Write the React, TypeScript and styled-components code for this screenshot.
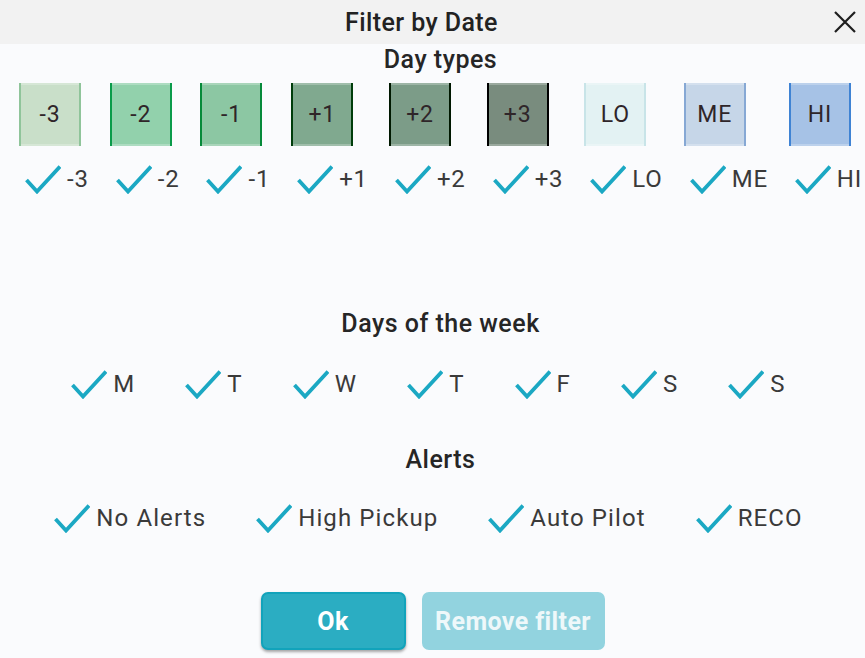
import React from "react";
import styled, { createGlobalStyle } from "styled-components";

const GlobalStyle = createGlobalStyle`
  html, body {
    margin: 0;
    padding: 0;
    background: #fafbfd;
  }
  body {
    font-family: Roboto, "Liberation Sans", sans-serif;
  }
`;

const Dialog = styled.div`
  width: 865px;
  height: 658px;
  overflow: hidden;
  background: #fafbfd;
  display: flex;
  flex-direction: column;
`;

const Header = styled.div`
  height: 44px;
  flex-shrink: 0;
  background: #f2f2f2;
  display: flex;
  align-items: center;
  padding-left: 18px;
`;

const HeaderTitle = styled.h1`
  flex: 1;
  margin: 0;
  text-align: center;
  font-size: 25px;
  font-weight: 500;
  letter-spacing: 0.4px;
  color: #222;
`;

const CloseButton = styled.button`
  width: 40px;
  height: 44px;
  border: 0;
  padding: 0;
  background: transparent;
  display: flex;
  align-items: center;
  justify-content: center;
  cursor: pointer;
`;

const SectionTitle = styled.h2<{ $top: number }>`
  margin: ${({ $top }) => $top}px 0 0;
  padding-left: 16px;
  height: 30px;
  line-height: 30px;
  text-align: center;
  font-size: 25px;
  font-weight: 500;
  letter-spacing: 0.5px;
  color: #262626;
`;

const DayTypeRow = styled.div`
  display: flex;
  gap: 21px;
  padding-left: 19px;
  margin-top: 8px;
`;

const DayTypeItem = styled.div`
  display: flex;
  flex-direction: column;
  align-items: flex-start;
  flex-shrink: 0;
  gap: 18px;
`;

const Swatch = styled.div<{ $bg: string; $edge: string }>`
  width: 58px;
  height: 63px;
  box-sizing: content-box;
  background: ${({ $bg }) => $bg};
  border-left: 2px solid ${({ $edge }) => $edge};
  border-right: 2px solid ${({ $edge }) => $edge};
  box-shadow: inset 0 2px 0 rgba(255, 255, 255, 0.25), inset 0 -2px 0 rgba(255, 255, 255, 0.25);
  display: flex;
  align-items: center;
  justify-content: center;
  font-size: 23px;
  letter-spacing: 0.8px;
  color: #2f2529;
`;

const CheckRow = styled.div<{ $indent?: number }>`
  display: flex;
  justify-content: center;
  gap: 50px;
  padding-right: 8px;
  margin-top: ${({ $indent }) => $indent ?? 0}px;
`;

const Check = styled.label<{ $shift?: boolean }>`
  display: flex;
  align-items: center;
  gap: 6px;
  height: 30px;
  margin-left: ${({ $shift }) => ($shift ? "6px" : "0")};
  font-size: 24px;
  letter-spacing: ${({ $shift }) => ($shift ? "0.8px" : "1.1px")};
  color: #3a3a3a;
  white-space: nowrap;
  cursor: pointer;
`;

const Footer = styled.div`
  display: flex;
  justify-content: center;
  gap: 16px;
  margin-top: 59px;
`;

const Button = styled.button<{ $disabled?: boolean }>`
  height: 58px;
  padding: 0;
  width: ${({ $disabled }) => ($disabled ? "183px" : "145px")};
  border-radius: 7px;
  border: 2px solid ${({ $disabled }) => ($disabled ? "#92d3df" : "#12a3bb")};
  background: ${({ $disabled }) => ($disabled ? "#92d3df" : "#2badc2")};
  box-shadow: ${({ $disabled }) => ($disabled ? "none" : "0 2px 3px rgba(0, 0, 0, 0.35)")};
  color: ${({ $disabled }) => ($disabled ? "#eef8fa" : "#ffffff")};
  font-family: Roboto, "Liberation Sans", sans-serif;
  font-size: 25px;
  font-weight: 700;
  letter-spacing: 0.4px;
`;

const CheckMark = () => (
  <svg width="36" height="29" viewBox="0 0 36 29">
    <path d="M1.5 15 L12 26.5 L35 1.5" fill="none" stroke="#1ba8c3" strokeWidth="3.8" strokeLinejoin="miter" />
  </svg>
);

const dayTypes = [
  { label: "-3", bg: "#c9dfc9", edge: "#8fc49a" },
  { label: "-2", bg: "#92d1ac", edge: "#0a9b4a" },
  { label: "-1", bg: "#8cc7a3", edge: "#068a3a" },
  { label: "+1", bg: "#80a98f", edge: "#003d0b" },
  { label: "+2", bg: "#7c9c88", edge: "#001800" },
  { label: "+3", bg: "#798c7e", edge: "#000000" },
  { label: "LO", bg: "#e3f2f3", edge: "#c8e4e8" },
  { label: "ME", bg: "#c6d6e8", edge: "#86a8d4" },
  { label: "HI", bg: "#a6c2e6", edge: "#3f83d4" },
];

const weekDays = ["M", "T", "W", "T", "F", "S", "S"];
const alerts = ["No Alerts", "High Pickup", "Auto Pilot", "RECO"];

const App: React.FC = () => (
  <>
    <GlobalStyle />
    <Dialog>
      <Header>
        <HeaderTitle>Filter by Date</HeaderTitle>
        <CloseButton aria-label="Close">
          <svg width="24" height="24" viewBox="0 0 24 24">
            <path d="M2 2 L22 22 M22 2 L2 22" stroke="#1e1e1e" strokeWidth="2.2" />
          </svg>
        </CloseButton>
      </Header>

      <SectionTitle $top={1}>Day types</SectionTitle>
      <DayTypeRow>
        {dayTypes.map((d) => (
          <DayTypeItem key={d.label}>
            <Swatch $bg={d.bg} $edge={d.edge}>{d.label}</Swatch>
            <Check $shift>
              <CheckMark />
              {d.label}
            </Check>
          </DayTypeItem>
        ))}
      </DayTypeRow>

      <SectionTitle $top={115}>Days of the week</SectionTitle>
      <CheckRow $indent={30}>
        {weekDays.map((d, i) => (
          <Check key={i}>
            <CheckMark />
            {d}
          </Check>
        ))}
      </CheckRow>

      <SectionTitle $top={46}>Alerts</SectionTitle>
      <CheckRow $indent={28}>
        {alerts.map((a) => (
          <Check key={a}>
            <CheckMark />
            {a}
          </Check>
        ))}
      </CheckRow>

      <Footer>
        <Button>Ok</Button>
        <Button $disabled>Remove filter</Button>
      </Footer>
    </Dialog>
  </>
);

export default App;
